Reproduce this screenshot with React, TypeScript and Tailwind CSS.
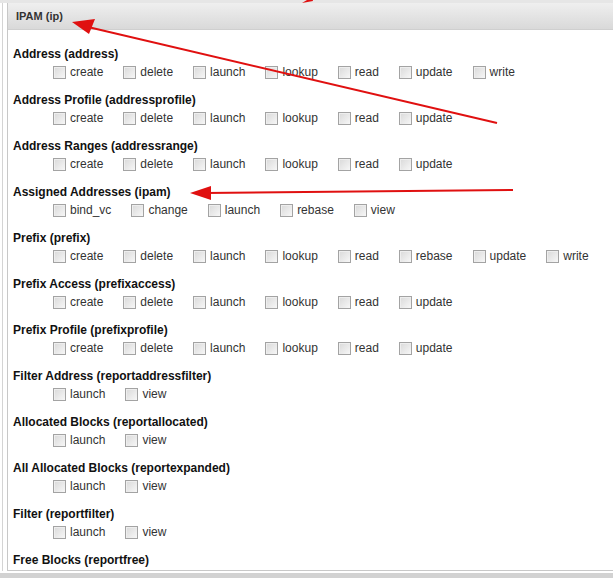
import React from "react";

const sections: { title: string; perms: string[] }[] = [
  { title: "Address (address)", perms: ["create", "delete", "launch", "lookup", "read", "update", "write"] },
  { title: "Address Profile (addressprofile)", perms: ["create", "delete", "launch", "lookup", "read", "update"] },
  { title: "Address Ranges (addressrange)", perms: ["create", "delete", "launch", "lookup", "read", "update"] },
  { title: "Assigned Addresses (ipam)", perms: ["bind_vc", "change", "launch", "rebase", "view"] },
  { title: "Prefix (prefix)", perms: ["create", "delete", "launch", "lookup", "read", "rebase", "update", "write"] },
  { title: "Prefix Access (prefixaccess)", perms: ["create", "delete", "launch", "lookup", "read", "update"] },
  { title: "Prefix Profile (prefixprofile)", perms: ["create", "delete", "launch", "lookup", "read", "update"] },
  { title: "Filter Address (reportaddressfilter)", perms: ["launch", "view"] },
  { title: "Allocated Blocks (reportallocated)", perms: ["launch", "view"] },
  { title: "All Allocated Blocks (reportexpanded)", perms: ["launch", "view"] },
  { title: "Filter (reportfilter)", perms: ["launch", "view"] },
  // rest of this one is scrolled out of view
  { title: "Free Blocks (reportfree)", perms: [] },
];

function Box() {
  return (
    <span className="inline-block w-[13px] h-[13px] border border-[#a3a3a3] bg-gradient-to-br from-[#d9d9d9] to-[#f7f7f7] shadow-[inset_1px_1px_0_#eee]" />
  );
}

function Arrows() {
  return (
    <svg className="absolute inset-0 pointer-events-none" width="613" height="578">
      <g stroke="#e01010" strokeWidth="2" fill="#e01010">
        <line x1="497" y1="123" x2="88" y2="27" />
        <polygon points="72,22 95,19 89,34" stroke="none" />
        <line x1="513" y1="190" x2="205" y2="193" />
        <polygon points="190,193 211,186 211,200" stroke="none" />
        <polygon points="302,3 312,-3 313,1" stroke="none" />
      </g>
    </svg>
  );
}

export default function App() {
  return (
    <div className="relative w-[613px] h-[578px] bg-white flex flex-col overflow-hidden font-['Liberation_Sans',Arial,sans-serif] text-[12px] text-[#222]">
      <div className="h-[3px] bg-[#e6e6e6]" />
      <div className="flex-1 flex min-h-0 pl-[2px]">
        <div className="w-[1px] bg-[#d4d4d4]" />
        <div className="w-[4px]" />
        <div className="flex-1 flex flex-col min-h-0 border-l border-b border-[#c8c8c8]">
          <div className="h-[27px] flex items-center pl-[8px] bg-gradient-to-b from-[#efefef] to-[#d9d9d9] border-b border-[#cfcfcf] text-[11px] font-bold text-[#333]">
            IPAM (ip)
          </div>
          <div className="flex-1 min-h-0 overflow-hidden pl-[5px] pt-[15px]">
            {sections.map((s) => (
              <div key={s.title} className="mb-[10px]">
                <div className="h-[18px] leading-[18px] font-bold text-[#111]">{s.title}</div>
                {s.perms.length > 0 && (
                  <div className="h-[18px] flex items-center pl-[40px] gap-x-[20px]">
                    {s.perms.map((p) => (
                      <label key={p} className="flex items-center gap-[4px] text-[#333]">
                        <Box />
                        <span>{p}</span>
                      </label>
                    ))}
                  </div>
                )}
              </div>
            ))}
          </div>
        </div>
      </div>
      <div className="h-[2px] bg-white" />
      <div className="h-[5px] bg-[#d2d2d2]" />
      <Arrows />
    </div>
  );
}
